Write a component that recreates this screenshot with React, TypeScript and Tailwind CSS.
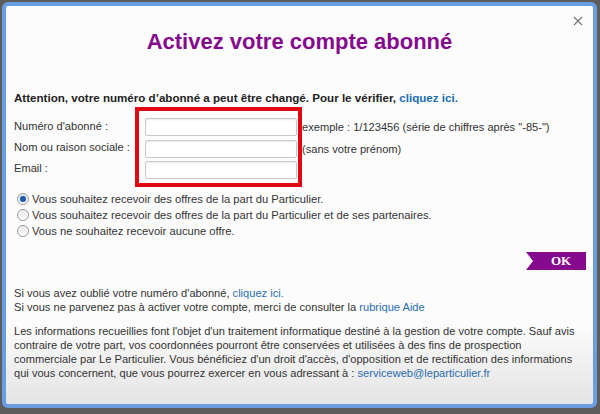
import React from "react";

const Radio = ({ checked = false }: { checked?: boolean }) => (
  <span className="flex h-[12px] w-[12px] shrink-0 items-center justify-center rounded-full border border-[#9a9a9a] bg-gradient-to-b from-[#e9e9e9] to-[#ffffff]">
    {checked && <span className="h-[6px] w-[6px] rounded-full bg-[#1f5fa8] shadow-[0_0_1px_#6fa8e8]" />}
  </span>
);

const Field = () => (
  <input
    type="text"
    className="h-[18px] w-[152px] rounded-[2px] border border-[#c9c9c9] bg-white shadow-[inset_0_1px_2px_rgba(0,0,0,0.08)] outline-none"
  />
);

export default function App() {
  return (
    <div
      className="h-[414px] w-[600px] bg-[#5d5d5d] pb-[6px] pl-[2px] pr-[3px] pt-[2px] text-[11.1px] text-[#333]"
      style={{ fontFamily: '"Liberation Sans", Arial, sans-serif' }}
    >
      <div className="relative flex h-full flex-col rounded-[6px] border-4 border-[#6b9de3] bg-gradient-to-b from-[#fcfcfc] from-80% to-[#e4e4e4] px-[8px]">
        {/* fermer */}
        <svg className="absolute right-[10px] top-[10px] h-[10px] w-[10px]" viewBox="0 0 10 10">
          <path d="M1 1 L9 9 M9 1 L1 9" stroke="#777" strokeWidth="1.2" fill="none" />
        </svg>

        {/* titre */}
        <h1 className="pt-[22px] text-center text-[22px] font-bold leading-[28px] text-[#850a8e]">
          Activez votre compte abonné
        </h1>

        <p className="mt-[35px] text-[11.6px] font-bold leading-[14px] text-[#222]">
          Attention, votre numéro d’abonné a peut être changé. Pour le vérifier,{" "}
          <span className="text-[#1a6db3]">cliquez ici.</span>
        </p>

        {/* formulaire */}
        <div className="mt-[2px] flex">
          <div className="flex w-[121px] flex-col pt-[9px] leading-[21px]">
            <span>Numéro d'abonné :</span>
            <span>Nom ou raison sociale :</span>
            <span>Email :</span>
          </div>
          <div className="flex w-[167px] flex-col gap-[3.5px] border-4 border-[#e30613] pb-[4px] pl-[6px] pt-[7px]">
            <Field />
            <Field />
            <Field />
          </div>
          <div className="flex flex-col pt-[11px] leading-[18px]">
            <span className="h-[21.5px]">exemple : 1/123456 (série de chiffres après "-85-")</span>
            <span>(sans votre prénom)</span>
          </div>
        </div>

        {/* offres */}
        <div className="mt-[4px] flex flex-col pl-[3px] text-[11.2px] leading-[16px]">
          <label className="flex items-center gap-[3px]">
            <Radio checked />
            <span>Vous souhaitez recevoir des offres de la part du Particulier.</span>
          </label>
          <label className="flex items-center gap-[3px]">
            <Radio />
            <span>Vous souhaitez recevoir des offres de la part du Particulier et de ses partenaires.</span>
          </label>
          <label className="flex items-center gap-[3px]">
            <Radio />
            <span>Vous ne souhaitez recevoir aucune offre.</span>
          </label>
        </div>

        <div className="-mr-[1px] mt-[13px] flex justify-end">
          <button
            className="flex h-[18px] w-[60px] items-center justify-center bg-[#850a8e] pl-[10px] text-[13px] font-bold text-white"
            style={{
              fontFamily: '"Liberation Serif", "Times New Roman", serif',
              clipPath: "polygon(0 0, 100% 0, 100% 100%, 0 100%, 7px 50%)",
            }}
          >
            OK
          </button>
        </div>

        <div className="mt-[16px] leading-[14px]">
          <p>
            Si vous avez oublié votre numéro d'abonné, <span className="text-[#2a6cb0]">cliquez ici.</span>
          </p>
          <p>
            Si vous ne parvenez pas à activer votre compte, merci de consulter la{" "}
            <span className="text-[#2a6cb0]">rubrique Aide</span>
          </p>
        </div>

        <p className="mt-[10px] leading-[14px]">
          Les informations recueillies font l'objet d'un traitement informatique destiné à la gestion de votre compte. Sauf avis
          contraire de votre part, vos coordonnées pourront être conservées et utilisées à des fins de prospection
          commerciale par Le Particulier. Vous bénéficiez d'un droit d'accès, d'opposition et de rectification des informations
          qui vous concernent, que vous pourrez exercer en vous adressant à :{" "}
          <span className="text-[#2a6cb0]">serviceweb@leparticulier.fr</span>
        </p>
      </div>
    </div>
  );
}
